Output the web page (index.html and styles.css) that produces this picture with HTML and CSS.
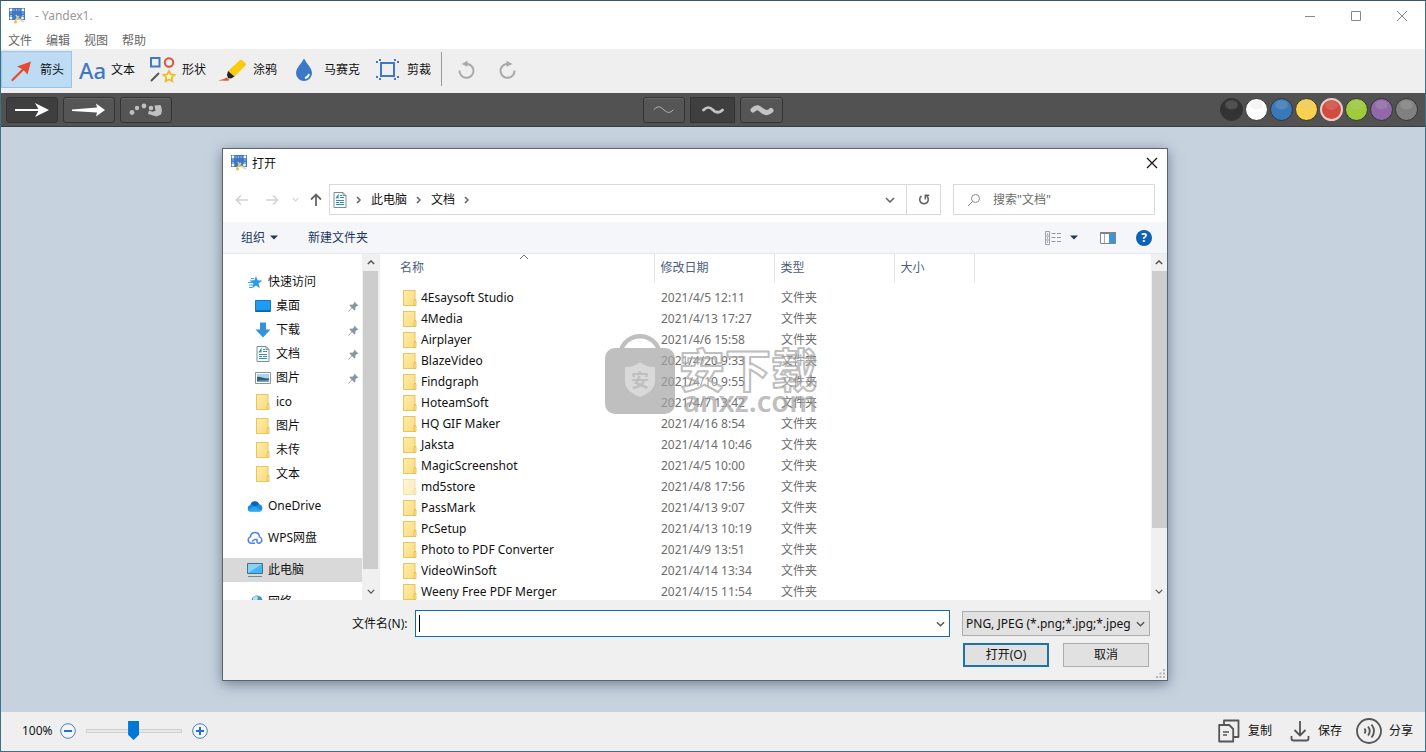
FILE: index.html
```html
<!DOCTYPE html>
<html lang="zh-CN">
<head>
<meta charset="utf-8">
<title>Yandex1.</title>
<link rel="stylesheet" href="styles.css">
</head>
<body>
<svg class="defs" aria-hidden="true">
  <linearGradient id="gold" x1="0" y1="0" x2="1" y2="1"><stop offset="0" stop-color="#ffecab"/><stop offset="1" stop-color="#fbdc7d"/></linearGradient>
  <symbol id="folder" viewBox="0 0 14 16"><rect x=".5" y=".5" width="11.5" height="15" fill="url(#gold)" stroke="#e6c65f"/><path d="M11.500 9.500h1.500v6h-2v-4z" fill="#fde795" stroke="#ddb84a" stroke-width=".8"/></symbol>
  <symbol id="pin" viewBox="0 0 11 11"><path d="M6.300.5l4.200 4.200-1 .3-.4-.2-1.800 1.900.2 2-1 .9-2.300-2.300L.6 10.800l-.4-.4 3.500-3.700L1.500 4.500l.9-.9 2 .2 1.900-1.800-.3-.5z" fill="#8b97a0"/></symbol>
  <symbol id="doc" viewBox="0 0 14 16"><path d="M1 .5h9l3 3v12H1z" fill="#fff" stroke="#7f8b90"/><path d="M10 .5v3h3" fill="none" stroke="#7f8b90"/><path d="M3 6.500l2-3v3M7 3.500h2M7 5.500h4M3 8.500h8M3 10.500h3M7 10.500h4M3 12.500h8" stroke="#2a93b8" stroke-width="1.200" fill="none"/></symbol>
  <symbol id="app" viewBox="0 0 16 16"><rect width="16" height="12" fill="#3f78c5"/><g fill="#fff"><circle cx="2" cy="2" r="1.400"/><circle cx="14" cy="2" r="1.400"/><circle cx="2" cy="10" r="1.400"/></g><path d="M4.500 2h8" stroke="#fff" stroke-dasharray="1 1.500"/><path d="M2 4.500v4M14 4.500v4" stroke="#fff" stroke-dasharray="1 1.500"/><path d="M7 7l2.500 5M10 8l-4 5" stroke="#d9cf8c" stroke-width="1.600"/><circle cx="6.500" cy="14" r="1.600" fill="#e4c252"/><path d="M10 11l5 3" stroke="#eadc9c" stroke-width="1.500"/><circle cx="13.500" cy="10" r="1.400" fill="#fff"/></symbol>
  <symbol id="down" viewBox="0 0 10 6"><path d="M1 1l4 4 4-4" fill="none" stroke="currentColor" stroke-width="1.600"/></symbol>
  <symbol id="up" viewBox="0 0 10 6"><path d="M1 5l4-4 4 4" fill="none" stroke="currentColor" stroke-width="1.800"/></symbol>
  <symbol id="next" viewBox="0 0 6 8"><path d="M1 1l3 3-3 3" fill="none" stroke="currentColor" stroke-width="1.500"/></symbol>
  <symbol id="tri" viewBox="0 0 8 5"><path d="M0 .5h8L4 4.500z" fill="currentColor"/></symbol>
</svg>

<header class="titlebar">
  <svg class="i16"><use href="#app"/></svg>
  <span class="app-title">- Yandex1.</span>
  <button class="win-btn" aria-label="最小化"><svg width="12" height="12" viewBox="0 0 12 12"><path d="M1 6.500h10" stroke="#888"/></svg></button>
  <button class="win-btn" aria-label="最大化"><svg width="12" height="12" viewBox="0 0 12 12"><path d="M1.500 1.500h9v9h-9z" fill="none" stroke="#888"/></svg></button>
  <button class="win-btn" aria-label="关闭"><svg width="12" height="12" viewBox="0 0 12 12"><path d="M1 1l10 10M11 1L1 11" stroke="#888"/></svg></button>
</header>
<nav class="menubar"><button>文件</button><button>编辑</button><button>视图</button><button>帮助</button></nav>

<div class="toolbar">
  <button class="tool active"><svg class="i28" viewBox="0 0 28 28"><path d="M4.500 24L18 10.500" stroke="#e8492f" stroke-width="2.200" stroke-linecap="round"/><path d="M23 5.500l-3.500 13-4.500-5-6-3z" fill="#e8492f"/></svg>箭头</button>
  <button class="tool"><span class="aa">Aa</span>文本</button>
  <button class="tool"><svg class="i28" viewBox="0 0 28 28"><rect x="1" y="2" width="8.500" height="8.500" fill="none" stroke="#3f78c5" stroke-width="2"/><circle cx="19" cy="6.500" r="4.200" fill="none" stroke="#dd5139" stroke-width="2"/><path d="M1 25l8-8" stroke="#555" stroke-width="2"/><path d="M19 15l1.700 3.400 3.800.5-2.800 2.600.7 3.800-3.400-1.800-3.400 1.800.7-3.800-2.800-2.600 3.800-.5z" fill="#fff6d5" stroke="#eebb22" stroke-width="1.700"/></svg>形状</button>
  <button class="tool"><svg class="i28" viewBox="0 0 28 28"><path d="M18.500 4.500c1-1 2-1 3 0l3 2.500c.7.800.7 1.700 0 2.500L13.500 20.500 7 15z" fill="#f9cc10"/><path d="M7 15l6.500 5.500-3.500 2-3-.3-1-3.200z" fill="#222"/><path d="M-3 24.500l6-1.500 2.500-1.500 3 2.500-1.500.8z" fill="#e0523a"/></svg>涂鸦</button>
  <button class="tool"><svg class="i28" viewBox="0 0 28 28"><path d="M12 2.500c2.500 5 8 9.500 8 14.500a8 8 0 0 1-16 0c0-5 5.500-9.500 8-14.500z" fill="#3c78c8"/><path d="M17 18a5 5 0 0 1-4 4" fill="none" stroke="#fff" stroke-width="1.800"/></svg>马赛克</button>
  <button class="tool"><svg class="i28" viewBox="0 0 28 28"><rect x="6" y="7" width="13" height="13" fill="none" stroke="#3f78c5" stroke-width="2"/><path d="M5 3v2M20 3v2M5 22v2M20 22v2M1 6h2M1 21h2M22 6h2M22 21h2" stroke="#3f78c5" stroke-width="2"/></svg>剪裁</button>
  <span class="divider"></span>
  <button class="history" aria-label="撤销"><svg width="20" height="20" viewBox="0 0 20 20"><path d="M9 4h2a7 7 0 1 1-8.500 6.500" fill="none" stroke="#a9a9a9" stroke-width="2"/><path d="M4.500 4l6-3.200v6z" fill="#a9a9a9"/></svg></button>
  <button class="history" aria-label="重做"><svg width="20" height="20" viewBox="0 0 20 20"><path d="M11 4H9a7 7 0 1 0 8.500 6.500" fill="none" stroke="#a9a9a9" stroke-width="2"/><path d="M15.500 4l-6-3.200v6z" fill="#a9a9a9"/></svg></button>
</div>

<div class="options">
  <div class="opt-group">
    <button class="opt on" aria-label="箭头样式一"><svg width="36" height="16" viewBox="0 0 36 16"><path d="M1 8h26" stroke="#fff" stroke-width="2"/><path d="M21 1l14 7-14 7 4-7z" fill="#fff"/></svg></button>
    <button class="opt" aria-label="箭头样式二"><svg width="36" height="16" viewBox="0 0 36 16"><path d="M1 7.500L26 5.500 25 1.500l9 6.500-9 6.500 1-4L1 9z" fill="#fff"/></svg></button>
    <button class="opt" aria-label="箭头样式三"><svg width="36" height="16" viewBox="0 0 36 16" fill="#c0c0c0"><circle cx="4" cy="10.500" r="2.400"/><circle cx="9" cy="6" r="2.200"/><circle cx="16" cy="4" r="2.400"/><circle cx="23" cy="6" r="2.300"/><path d="M26.500 3.500l6-.5q2.500 5 .5 9.500l-4.500 2-8.500-2.500 1-3.500 3.500 1.200 3-1z"/></svg></button>
  </div>
  <div class="opt-group">
    <button class="opt thin" aria-label="细"><svg width="26" height="12" viewBox="0 0 26 12"><path d="M3 5.500c5-5 7-2 10 .5s6 4 9 0" fill="none" stroke="#b5b5b5" stroke-linecap="round"/></svg></button>
    <button class="opt mid on" aria-label="中"><svg width="26" height="12" viewBox="0 0 26 12"><path d="M3.500 6c4-4 6.500-3 9.500 0s6.500 3 9.500 0" fill="none" stroke="#c4c4c4" stroke-width="2.800" stroke-linecap="round"/></svg></button>
    <button class="opt thick" aria-label="粗"><svg width="26" height="12" viewBox="0 0 26 12"><path d="M4 6c4-4 6-2 9 .5s6 3 9 0" fill="none" stroke="#c4c4c4" stroke-width="5" stroke-linecap="round"/></svg></button>
  </div>
  <div class="swatches">
    <input type="radio" name="color" class="c-black" aria-label="黑色"><input type="radio" name="color" class="c-white" aria-label="白色"><input type="radio" name="color" class="c-blue" aria-label="蓝色"><input type="radio" name="color" class="c-yellow" aria-label="黄色"><input type="radio" name="color" class="c-red" aria-label="红色" checked><input type="radio" name="color" class="c-green" aria-label="绿色"><input type="radio" name="color" class="c-purple" aria-label="紫色"><input type="radio" name="color" class="c-gray" aria-label="灰色">
  </div>
</div>

<main class="canvas">
  <section class="dialog" role="dialog" aria-labelledby="dlg-title">
    <div class="dlg-title"><svg class="i16"><use href="#app"/></svg><h1 id="dlg-title">打开</h1><button aria-label="关闭"><svg width="12" height="12" viewBox="0 0 12 12"><path d="M1 1l10 10M11 1L1 11" stroke="#111" stroke-width="1.200"/></svg></button></div>
    <div class="navrow">
      <button class="nb faint" aria-label="后退"><svg width="14" height="12" viewBox="0 0 14 12"><path d="M1.500 6H13M6 1.500L1.500 6 6 10.500" fill="none" stroke="currentColor" stroke-width="1.600"/></svg></button>
      <button class="nb faint" aria-label="前进"><svg width="14" height="12" viewBox="0 0 14 12"><path d="M1 6h11.500M8 1.500L12.500 6 8 10.500" fill="none" stroke="currentColor" stroke-width="1.600"/></svg></button>
      <button class="nb recent faint" aria-label="最近的位置"><svg width="7" height="5"><use href="#down"/></svg></button>
      <button class="nb upward" aria-label="向上"><svg width="12" height="14" viewBox="0 0 12 14"><path d="M6 13V2M1 6.500l5-5 5 5" fill="none" stroke="#666" stroke-width="1.800"/></svg></button>
      <div class="address">
        <svg class="doc"><use href="#doc"/></svg><svg class="sep"><use href="#next"/></svg><button>此电脑</button><svg class="sep"><use href="#next"/></svg><button>文档</button><svg class="sep"><use href="#next"/></svg>
        <button class="drop" aria-label="历史"><svg width="10" height="6"><use href="#down"/></svg></button>
        <button class="refresh" aria-label="刷新"><svg width="12" height="13" viewBox="0 0 12 13"><path d="M3.500 3A4.300 4.300 0 1 0 8.500 3" fill="none" stroke="#666" stroke-width="1.600"/><path d="M7.300 6.500V2.300h4" fill="none" stroke="#666" stroke-width="1.500"/></svg></button>
      </div>
      <label class="search"><svg width="14" height="14" viewBox="0 0 14 14"><circle cx="8.500" cy="5.500" r="4" fill="none" stroke="#888"/><path d="M5.500 8.500L1 13" stroke="#888"/></svg><input type="text" placeholder="搜索&quot;文档&quot;" aria-label="搜索文档"></label>
    </div>
    <div class="commands">
      <button>组织<svg class="tri"><use href="#tri"/></svg></button>
      <button>新建文件夹</button>
      <button class="view" aria-label="视图"><svg width="17" height="14" viewBox="0 0 17 14"><path d="M.5.500h4v13h-4zM.5 5h4M.5 9h4" fill="none" stroke="#9aa0a4"/><path d="M2 3h1M2 7h1M2 11h1" stroke="#667"/><path d="M6.500 2.500h4M12 2.500h4M6.500 6.500h4M12 6.500h4M6.500 10.500h4M12 10.500h4" stroke="#9299a0"/></svg><svg class="tri"><use href="#tri"/></svg></button>
      <button class="pane" aria-label="预览窗格"><svg width="16" height="12" viewBox="0 0 16 12"><path d="M.5.500h15v11H.5z" fill="#fff" stroke="#7b868e"/><path d="M0 1h16" stroke="#7b868e" stroke-width="2"/><path d="M4.500 2v9" stroke="#aaa"/><path d="M9 2h6v9H9z" fill="#3b96d9"/></svg></button>
      <button class="help" aria-label="帮助">?</button>
    </div>
    <div class="browser">
      <ul class="tree">
        <li class="root"><svg class="i16" viewBox="0 0 16 16"><path d="M9 2l1.500 4.200 4.800.2-3.800 3 1.300 4.800L9 11.500 5 14.300l1.400-4.700-3.800-3 4.800-.3z" fill="#2a9be8"/><path d="M4 4.500h3M1 8.500h5M2 11h4M2 13.500h3" stroke="#3da2ea"/></svg>快速访问</li>
        <li><svg class="i16" viewBox="0 0 16 16"><path d="M.5 2.500h15v11H.5z" fill="#1f9bf5" stroke="#1577c4"/><path d="M1 13h14" stroke="#0b5e9e" stroke-width="1.500"/></svg>桌面<svg class="pin"><use href="#pin"/></svg></li>
        <li><svg class="i16" viewBox="0 0 16 16"><path d="M5 .5h6v7h4.500L8 15.500.5 7.500H5z" fill="#3492dc"/></svg>下载<svg class="pin"><use href="#pin"/></svg></li>
        <li><svg class="i16"><use href="#doc"/></svg>文档<svg class="pin"><use href="#pin"/></svg></li>
        <li><svg class="i16" viewBox="0 0 16 16"><path d="M.5 2.500h15v11H.5z" fill="#fff" stroke="#8b959b"/><path d="M2 4h12v4H2z" fill="#a9d4ef"/><path d="M2 7c4-1 6 2 12 1v4H2z" fill="#2d6278"/><path d="M2 11c4-1 8 0 12-1v2H2z" fill="#79a9c4"/></svg>图片<svg class="pin"><use href="#pin"/></svg></li>
        <li><svg class="i16"><use href="#folder"/></svg>ico</li>
        <li><svg class="i16"><use href="#folder"/></svg>图片</li>
        <li><svg class="i16"><use href="#folder"/></svg>未传</li>
        <li><svg class="i16"><use href="#folder"/></svg>文本</li>
        <li class="root gap"><svg class="i16" viewBox="0 0 16 16"><path d="M3.500 7a4.500 4.500 0 0 1 8.700-.8L9 11H2z" fill="#0a64b8"/><path d="M12 6.200A3.800 3.800 0 0 1 13 13.500H3.500A3.300 3.300 0 0 1 3.500 7c2 0 3 .5 4.500 1.500z" fill="#168ce0"/><path d="M8 8.500l7 4.200c-.6.600-1.300.8-2 .8H3.500c-1.500 0-2.500-.7-3-1.500z" fill="#2aa7ee"/></svg>OneDrive</li>
        <li class="root gap"><svg class="i16" viewBox="0 0 16 16"><path d="M8 13.300H4a3.300 3.300 0 0 1-.5-6.400C3.800 4 5.800 2.500 8 2.500s4.200 1.500 4.500 4.400a3.300 3.300 0 0 1-.5 6.400c-1.500 0-2-1-2-2V9.500H7.500L5 11.500" fill="none" stroke="#4e82e4" stroke-width="1.500"/></svg>WPS网盘</li>
        <li class="root gap selected"><svg class="i16" viewBox="0 0 16 16"><path d="M.5 1.500h15v10H.5z" fill="#48b5f0" stroke="#4a6e82"/><path d="M1 11L15 2H1z" fill="#86d4fa"/><path d="M1 14.500h14" stroke="#6e8a98"/></svg>此电脑</li>
        <li class="root gap"><svg class="i16" viewBox="0 0 16 16"><circle cx="10" cy="7" r="5.500" fill="#4095c4"/><path d="M6 4c2-3 5-2 5 0s-3 4-5 4z" fill="#b9e2e8"/><path d="M1 9h9v6H1z" fill="#62b7ea" stroke="#507689"/></svg>网络</li>
      </ul>
      <div class="scroll"><svg width="8" height="5"><use href="#up"/></svg><i class="thumb left-thumb"></i><svg width="8" height="5"><use href="#down"/></svg></div>
      <div class="files">
        <svg class="sort" width="10" height="6" viewBox="0 0 10 6"><path d="M1 5l4-4 4 4" fill="none" stroke="#777"/></svg>
        <table>
          <colgroup><col class="w-name"><col class="w-date"><col class="w-type"><col class="w-size"><col></colgroup>
          <thead><tr><th>名称</th><th>修改日期</th><th>类型</th><th>大小</th><th></th></tr></thead>
          <tbody>
            <tr><td><svg class="i16"><use href="#folder"/></svg>4Esaysoft Studio</td><td>2021/4/5 12:11</td><td>文件夹</td><td></td><td></td></tr>
            <tr><td><svg class="i16"><use href="#folder"/></svg>4Media</td><td>2021/4/13 17:27</td><td>文件夹</td><td></td><td></td></tr>
            <tr><td><svg class="i16"><use href="#folder"/></svg>Airplayer</td><td>2021/4/6 15:58</td><td>文件夹</td><td></td><td></td></tr>
            <tr><td><svg class="i16"><use href="#folder"/></svg>BlazeVideo</td><td>2021/4/20 9:33</td><td>文件夹</td><td></td><td></td></tr>
            <tr><td><svg class="i16"><use href="#folder"/></svg>Findgraph</td><td>2021/4/10 9:55</td><td>文件夹</td><td></td><td></td></tr>
            <tr><td><svg class="i16"><use href="#folder"/></svg>HoteamSoft</td><td>2021/4/7 13:42</td><td>文件夹</td><td></td><td></td></tr>
            <tr><td><svg class="i16"><use href="#folder"/></svg>HQ GIF Maker</td><td>2021/4/16 8:54</td><td>文件夹</td><td></td><td></td></tr>
            <tr><td><svg class="i16"><use href="#folder"/></svg>Jaksta</td><td>2021/4/14 10:46</td><td>文件夹</td><td></td><td></td></tr>
            <tr><td><svg class="i16"><use href="#folder"/></svg>MagicScreenshot</td><td>2021/4/5 10:00</td><td>文件夹</td><td></td><td></td></tr>
            <tr><td><svg class="i16 hidden-item"><use href="#folder"/></svg>md5store</td><td>2021/4/8 17:56</td><td>文件夹</td><td></td><td></td></tr>
            <tr><td><svg class="i16"><use href="#folder"/></svg>PassMark</td><td>2021/4/13 9:07</td><td>文件夹</td><td></td><td></td></tr>
            <tr><td><svg class="i16"><use href="#folder"/></svg>PcSetup</td><td>2021/4/13 10:19</td><td>文件夹</td><td></td><td></td></tr>
            <tr><td><svg class="i16"><use href="#folder"/></svg>Photo to PDF Converter</td><td>2021/4/9 13:51</td><td>文件夹</td><td></td><td></td></tr>
            <tr><td><svg class="i16"><use href="#folder"/></svg>VideoWinSoft</td><td>2021/4/14 13:34</td><td>文件夹</td><td></td><td></td></tr>
            <tr><td><svg class="i16"><use href="#folder"/></svg>Weeny Free PDF Merger</td><td>2021/4/15 11:54</td><td>文件夹</td><td></td><td></td></tr>
          </tbody>
        </table>
      </div>
      <div class="scroll"><svg width="8" height="5"><use href="#up"/></svg><i class="thumb right-thumb"></i><svg width="8" height="5"><use href="#down"/></svg></div>
    </div>
    <div class="dlg-foot">
      <div class="row">
        <label for="fname">文件名(N):</label>
        <div class="combo"><i class="caret"></i><input id="fname" type="text"><button aria-label="展开"><svg width="9" height="6"><use href="#down"/></svg></button></div>
        <div class="filter"><select aria-label="文件类型"><option>PNG, JPEG (*.png;*.jpg;*.jpeg)</option></select><svg width="9" height="6"><use href="#down"/></svg></div>
      </div>
      <div class="row actions"><button class="primary">打开(O)</button><button>取消</button></div>
    </div>
    <svg class="grip" width="10" height="10" viewBox="0 0 10 10" fill="#b5b5b5"><path d="M7 0h2v2H7zM7 3.500h2v2H7zM3.500 3.500h2v2h-2zM7 7h2v2H7zM3.500 7h2v2h-2zM0 7h2v2H0z"/></svg>
    <svg class="watermark" width="220" height="84" viewBox="0 0 220 84">
      <path d="M18 17a20 20 0 0 1 38 0" fill="none" stroke="#a4a4a4" stroke-width="4.500"/>
      <rect x="2" y="15" width="70" height="66" rx="10" fill="#a4a4a4"/>
      <path d="M37 29c5 4 9 5 15 5v14c0 8-7 13-15 16-8-3-15-8-15-16V34c6 0 10-1 15-5z" fill="#c9c9c9"/>
      <text class="wm-seal" x="28" y="54">安</text>
      <text class="wm-name" x="76" y="54">安下载</text>
      <text class="wm-site" x="80" y="79">anxz.com</text>
    </svg>
  </section>
</main>

<footer class="status">
  <span>100%</span>
  <button aria-label="缩小"><svg width="16" height="16" viewBox="0 0 16 16"><circle cx="8" cy="8" r="7.300" fill="#f2f6fb" stroke="#4a80c4"/><path d="M4 8h8" stroke="#2a6fc4" stroke-width="2"/></svg></button>
  <input type="range" min="0" max="100" value="50" aria-label="缩放">
  <button aria-label="放大"><svg width="16" height="16" viewBox="0 0 16 16"><circle cx="8" cy="8" r="7.300" fill="#f2f6fb" stroke="#4a80c4"/><path d="M4 8h8M8 4v8" stroke="#2a6fc4" stroke-width="2"/></svg></button>
  <div class="exports">
    <button><svg width="22" height="24" viewBox="0 0 22 24"><path d="M6 5V1.500h14.500V18H16M1.200 6h10l4 4v12.500h-14z" fill="none" stroke="#555" stroke-width="1.800" stroke-linejoin="round"/><path d="M5 13h6M5 16h4" fill="none" stroke="#555" stroke-width="1.500"/></svg>复制</button>
    <button><svg width="20" height="24" viewBox="0 0 20 24"><path d="M10 2v14M4.500 11l5.500 5.500 5.500-5.500M1.500 17v2.500q0 2 2 2h13q2 0 2-2V17" fill="none" stroke="#555" stroke-width="1.800"/></svg>保存</button>
    <button class="share"><svg width="26" height="26" viewBox="0 0 26 26" fill="none" stroke="#555" stroke-width="1.800"><circle cx="13" cy="13" r="12"/><path d="M8.500 10.500q2 2.500 0 5M12 8.500q3.500 4.500 0 9M15.500 6.500q5 6.500 0 13"/></svg>分享</button>
  </div>
</footer>
</body>
</html>
```
FILE: styles.css
```css
* { box-sizing: border-box; }
body {
  margin: 0;
  height: 100vh;
  display: flex;
  flex-direction: column;
  overflow: hidden;
  border: 1px solid #3f7186;
  border-top-color: #3a5468;
  background: #efefef;
  color: #111;
  font: 12px/16px "Noto Sans", "Noto Sans CJK SC", sans-serif;
}
button, input, select { font: inherit; color: inherit; margin: 0; }
button {
  display: inline-flex;
  align-items: center;
  justify-content: center;
  padding: 0;
  border: 0;
  background: none;
  white-space: nowrap;
}
svg { flex: none; display: block; }
.defs { position: absolute; width: 0; height: 0; }
.i16 { width: 16px; height: 16px; }
.i28 { width: 28px; height: 28px; overflow: visible; }

.titlebar { display: flex; align-items: center; height: 29px; padding-left: 8px; background: #fff; color: #999; }
.app-title { flex: 1; padding-left: 10px; }
.win-btn { width: 46px; height: 28px; }
.menubar { display: flex; gap: 14px; height: 19px; padding-left: 7px; background: #fff; color: #666; }
.menubar button { height: 22px; }

.toolbar { display: flex; align-items: center; height: 44px; padding-bottom: 4px; }
.tool { height: 37px; padding: 2px 8px 0 7px; gap: 4px; }
.tool.active { background: #bddcf4; box-shadow: inset 0 0 0 1px #96c5ea; }
.aa { width: 28px; color: #3f78c5; font-size: 22px; line-height: 28px; font-weight: 500; text-align: left; }
.divider { width: 1px; height: 34px; margin: 0 15px 0 2px; background: #999; }
.history { width: 20px; height: 22px; padding-top: 2px; margin-right: 20px; }

.options {
  display: grid;
  grid-template-columns: 1fr auto 1fr;
  align-items: center;
  height: 34px;
  padding: 0 5px;
  background: #525252;
  border-bottom: 1px solid #3b3b3b;
}
.opt-group { display: flex; gap: 5px; }
.opt { width: 52px; height: 26px; border: 1px solid #333; border-radius: 3px; background: #555; box-shadow: inset 0 1px 0 #686868; }
.opt.on { background: #3f3f3f; box-shadow: none; }
.opt.thin { width: 42px; }
.opt.mid { width: 45px; border-radius: 0; }
.opt.thick { width: 43px; }
.swatches { display: flex; gap: 2px; justify-content: flex-end; padding-right: 2px; }
.swatches input {
  appearance: none;
  width: 23px;
  height: 23px;
  border: 1px solid #333;
  border-radius: 50%;
  background: radial-gradient(ellipse 7px 5px at 50% 28%, rgba(200, 200, 200, .2) 80%, transparent) var(--c);
}
.swatches input:checked { border: 2px solid #e6cdca; }
.swatches .c-black { --c: #333; }
.swatches .c-white { --c: #fff; }
.swatches .c-blue { --c: #3978b9; }
.swatches .c-yellow { --c: #f9d14d; }
.swatches .c-red { --c: #d24b3e; }
.swatches .c-green { --c: #9fcc3b; }
.swatches .c-purple { --c: #9168a8; }
.swatches .c-gray { --c: #808080; }

.canvas { position: relative; flex: 1; background: #c7d2df; }
.dialog {
  position: absolute;
  left: 221px;
  right: 257px;
  top: 21px;
  background: #fff;
  border: 1px solid #5a6470;
  box-shadow: 0 3px 12px rgba(30, 45, 70, .5);
}
.dlg-title { display: flex; align-items: center; gap: 5px; height: 28px; padding-left: 8px; }
.dlg-title h1 { flex: 1; margin: 0; padding-top: 2px; font-size: 12px; font-weight: 400; }
.dlg-title button { width: 30px; height: 28px; }
.navrow { display: flex; align-items: center; padding: 7px 12px 7px 4px; }
.nb { width: 30px; height: 30px; }
.nb.faint { color: #d2d2d2; }
.nb.recent { width: 16px; }
.nb.upward { width: 26px; }
.address { flex: 1; display: flex; align-items: center; height: 31px; padding-left: 3px; border: 1px solid #d9d9d9; color: #111; }
.address .doc { width: 14px; height: 16px; }
.sep { width: 6px; height: 8px; margin: 0 9px; color: #666; }
.drop { width: 32px; height: 29px; margin-left: auto; color: #666; }
.refresh { width: 34px; height: 29px; border-left: 1px solid #d9d9d9; }
.search { display: flex; align-items: center; gap: 12px; width: 202px; height: 31px; margin-left: 12px; padding-left: 13px; border: 1px solid #d9d9d9; }
.search input { flex: 1; min-width: 0; padding: 0; border: 0; outline: 0; background: none; }
.search input::placeholder { color: #6d6d6d; opacity: 1; }
.commands { display: flex; align-items: center; height: 32px; padding: 0 15px 0 18px; background: #f4f6f9; border-bottom: 1px solid #e6e8eb; color: #1e395b; }
.commands button + button { margin-left: 30px; }
.tri { width: 8px; height: 5px; margin-left: 5px; }
.commands .view { margin-left: auto; }
.commands .view .tri { margin-left: 8px; }
.commands .pane { margin-left: 22px; }
.commands .help { width: 16px; height: 16px; margin-left: 20px; border-radius: 50%; background: #0d62b4; color: #fff; font-weight: 700; }

.browser { display: grid; grid-template-columns: 139px 17px 1fr 16px; height: 346px; overflow: hidden; }
.tree { height: 346px; margin: 0; padding: 16px 0 0; list-style: none; overflow: hidden; }
.tree li { display: flex; align-items: center; gap: 5px; height: 24px; padding: 0 3px 0 32px; }
.tree li.root { padding-left: 24px; }
.tree li.gap { margin-top: 8px; }
.tree li.selected { background: #d9d9d9; }
.pin { width: 11px; height: 11px; margin-left: auto; }
.scroll { display: flex; flex-direction: column; align-items: center; justify-content: space-between; height: 346px; padding: 6px 0; background: #f0f0f0; color: #555; }
.thumb { width: 15px; margin: 6px 0 auto; background: #cdcdcd; }
.left-thumb { height: 298px; }
.right-thumb { height: 257px; }
.files { position: relative; height: 346px; border-left: 1px solid #f0f0f0; overflow: hidden; }
.sort { position: absolute; left: 139px; top: 0; }
table { width: 100%; table-layout: fixed; border-collapse: collapse; color: #6d6d6d; }
.w-name { width: 274px; }
.w-date, .w-type { width: 120px; }
.w-size { width: 80px; }
th { height: 28px; padding: 0 6px; border-left: 1px solid #e3e3e3; color: #4c607a; font-weight: 400; text-align: left; }
th:first-child { padding-left: 20px; border-left: 0; }
thead::after { content: ""; display: block; height: 5px; }
td { height: 21px; padding: 0 6px 0 7px; white-space: nowrap; }
td:first-child { padding-left: 22px; color: #111; }
td .i16 { display: inline-block; margin-right: 3px; vertical-align: -4px; }
.hidden-item { opacity: .5; }

.dlg-foot { padding: 10px 17px 13px 129px; background: #f0f0f0; }
.row { display: flex; align-items: center; }
.combo { flex: 1; display: flex; align-items: center; height: 27px; margin: 0 12px 0 7px; padding-left: 3px; border: 1px solid #0f6ca8; background: #fff; }
.caret { width: 1px; height: 17px; background: #000; }
.combo input { flex: 1; min-width: 0; border: 0; outline: 0; background: none; }
.combo button { width: 17px; height: 25px; color: #555; }
.filter { display: grid; width: 188px; align-items: center; color: #111; }
.filter select { grid-area: 1 / 1; width: 188px; height: 25px; padding: 0 18px 0 3px; appearance: none; border: 1px solid #adadad; border-radius: 0; background: #e1e1e1; }
.filter svg { grid-area: 1 / 1; justify-self: end; margin-right: 5px; color: #555; pointer-events: none; }
.actions { justify-content: flex-end; gap: 14px; margin-top: 6px; padding-right: 1px; }
.actions button { width: 86px; height: 24px; border: 1px solid #adadad; background: #e1e1e1; }
.actions .primary { border: 2px solid #1a73ad; }
.grip { position: absolute; right: 1px; bottom: 1px; }
.watermark { position: absolute; left: 380px; top: 184px; opacity: .7; pointer-events: none; }
.wm-seal { font-size: 18px; font-weight: 700; fill: #a4a4a4; }
.wm-name { font-size: 46px; font-weight: 700; fill: #fff; fill-opacity: .5; stroke: #a4a4a4; stroke-width: 2px; stroke-linejoin: round; }
.wm-site { font-size: 29px; font-weight: 600; fill: #a4a4a4; }

.status { display: flex; align-items: center; height: 39px; padding: 0 12px 2px 21px; }
.status > button { margin: 0 10px 0 7px; }
.status input { appearance: none; width: 96px; height: 20px; margin: 0; background: linear-gradient(#e8e8e8, #e8e8e8) center / 94px 2px no-repeat, linear-gradient(#cfcfcf, #cfcfcf) center / 96px 4px no-repeat; }
.status input::-webkit-slider-thumb { appearance: none; width: 11px; height: 19px; background: #0078d7; clip-path: polygon(0 0, 100% 0, 100% 72%, 50% 100%, 0 72%); }
.status input + button { margin-left: 10px; }
.exports { display: flex; gap: 18px; margin-left: auto; }
.exports button { gap: 8px; }
.exports .share { gap: 7px; margin-left: -4px; }
```
